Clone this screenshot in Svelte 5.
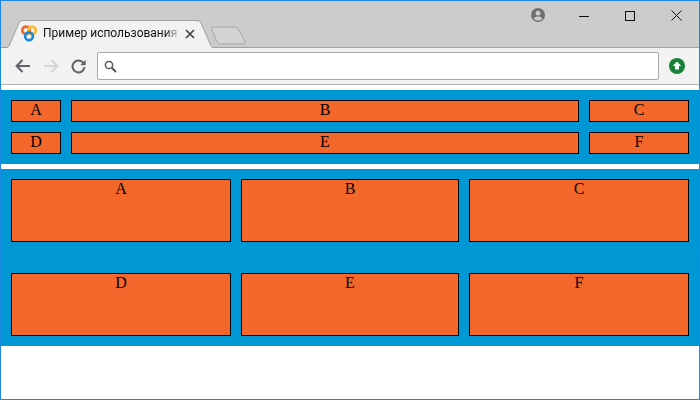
<script lang="ts">
	const top = ['A', 'B', 'C', 'D', 'E', 'F'];
</script>

<div class="window">
	<div class="tabstrip">
		<svg class="tabs" width="260" height="47" viewBox="0 0 260 47">
			<path d="M211.5 27.5 Q211 26 213 26 L235 26 Q237 26 238 27.5 L245 40 Q246 43 243 43 L221 43 Q218 43 217 41 Z" fill="#d4d4d4" stroke="#a6a6a6" />
			<path d="M6 47.5 L6 47 Q8 47 9 45 L19 22 Q20 19.5 23 19.5 L197 19.5 Q200 19.5 201 22 L211 45 Q212 47 214 47 L214 47.5 Z" fill="#f2f2f2" stroke="#a0a0a0" />
		</svg>
		<svg class="favicon" width="16" height="17" viewBox="0 0 16 17" fill="none" stroke-width="2.7">
			<circle cx="5" cy="5.4" r="3.7" stroke="#f4662c" />
			<circle cx="11" cy="5.4" r="3.7" stroke="#fbc02d" />
			<circle cx="8" cy="11.2" r="3.9" stroke="#1e88d8" />
		</svg>
		<span class="tab-title">Пример использования</span>
		<svg class="tab-close" width="10" height="10" viewBox="0 0 10 10">
			<path d="M1 1 L9 9 M9 1 L1 9" stroke="#444" stroke-width="1.7" />
		</svg>
		<svg class="profile" width="14" height="14" viewBox="0 0 14 14">
			<circle cx="7" cy="7" r="7" fill="#6f6f6f" />
			<circle cx="7" cy="5.2" r="2.4" fill="#ccc" />
			<path d="M2.8 11 Q3.6 8.6 7 8.6 Q10.4 8.6 11.2 11 Q9.5 12.6 7 12.6 Q4.5 12.6 2.8 11 Z" fill="#ccc" />
		</svg>
		<div class="controls">
			<svg width="10" height="10" viewBox="0 0 10 10"><path d="M0 5.5 H10" stroke="#111" /></svg>
			<svg width="10" height="10" viewBox="0 0 10 10"><rect x="0.5" y="0.5" width="9" height="9" fill="none" stroke="#111" /></svg>
			<svg width="11" height="11" viewBox="0 0 11 11"><path d="M0.5 0.5 L10.5 10.5 M10.5 0.5 L0.5 10.5" stroke="#111" /></svg>
		</div>
	</div>

	<div class="toolbar">
		<svg width="16" height="14" viewBox="0 0 16 14" fill="none" stroke="#5f6368" stroke-width="2">
			<path d="M15 7 H2 M7.5 1 L1.6 7 L7.5 13" />
		</svg>
		<svg width="16" height="14" viewBox="0 0 16 14" fill="none" stroke="#d4d4d4" stroke-width="2">
			<path d="M1 7 H14 M8.5 1 L14.4 7 L8.5 13" />
		</svg>
		<svg width="15" height="15" viewBox="0 0 15 15" fill="none">
			<path d="M12.6 4.2 A6 6 0 1 0 13.5 8" stroke="#5f6368" stroke-width="2" />
			<path d="M14.6 0.8 V6.2 H9.2 Z" fill="#5f6368" />
		</svg>
		<div class="omnibox">
			<svg width="13" height="13" viewBox="0 0 13 13" fill="none" stroke="#555">
				<circle cx="5" cy="5" r="3.6" stroke-width="1.5" />
				<path d="M7.8 7.8 L12 12" stroke-width="2" />
			</svg>
		</div>
		<svg width="16" height="16" viewBox="0 0 16 16">
			<circle cx="8" cy="8" r="8" fill="#188038" />
			<path d="M8 3.4 L12.2 8 H10 V11.6 H6 V8 H3.8 Z" fill="#fff" />
		</svg>
	</div>

	<div class="page">
		<div class="grid small">
			{#each top as label}
				<div class="cell">{label}</div>
			{/each}
		</div>
		<div class="grid large">
			{#each top as label}
				<div class="cell">{label}</div>
			{/each}
		</div>
	</div>
</div>

<style>
	:global(body) {
		margin: 0;
	}

	.window {
		box-sizing: border-box;
		width: 700px;
		height: 400px;
		border: 1px solid #1e88e5;
		background: #fff;
		overflow: hidden;
	}

	.tabstrip {
		position: relative;
		box-sizing: border-box;
		height: 47px;
		background: #cccccc;
		border-bottom: 1px solid #a0a0a0;
	}

	.tabs {
		position: absolute;
		left: -1px;
		top: 0;
	}

	.favicon {
		position: absolute;
		left: 20px;
		top: 24px;
	}

	.tab-title {
		position: absolute;
		left: 42px;
		top: 24px;
		white-space: nowrap;
		font: 12px/17px Roboto, sans-serif;
		color: #111;
		-webkit-mask-image: linear-gradient(to right, #000 122px, rgba(0, 0, 0, 0.25) 134px);
		mask-image: linear-gradient(to right, #000 122px, rgba(0, 0, 0, 0.25) 134px);
	}

	.tab-close {
		position: absolute;
		left: 184px;
		top: 28px;
	}

	.profile {
		position: absolute;
		left: 530px;
		top: 7px;
	}

	.controls {
		position: absolute;
		right: 17px;
		top: 9px;
		display: flex;
		align-items: center;
		gap: 36px;
	}

	.toolbar {
		box-sizing: border-box;
		height: 37px;
		display: flex;
		align-items: center;
		gap: 12px;
		padding: 0 14px;
		background: #f2f2f2;
		border-bottom: 1px solid #b4b4b4;
	}

	.omnibox {
		box-sizing: border-box;
		flex: 1;
		height: 28px;
		display: flex;
		align-items: center;
		padding-left: 6px;
		margin: 0 -2px 0 -1px;
		background: #fff;
		border: 1px solid #a9a9a9;
		border-radius: 2px;
	}

	.page {
		padding-top: 5px;
		display: flex;
		flex-direction: column;
		gap: 5px;
	}

	.grid {
		display: grid;
		padding: 10px;
		background: #0098d4;
		column-gap: 10px;
	}

	.small {
		grid-template-columns: 50px 1fr 100px;
		grid-auto-rows: 22px;
		row-gap: 10px;
	}

	.large {
		grid-template-columns: 220px 1fr 220px;
		grid-auto-rows: 63px;
		row-gap: 31px;
	}

	.cell {
		box-sizing: border-box;
		background: #f3672b;
		border: 1px solid #000;
		text-align: center;
		font: 16px/18px "Liberation Serif", serif;
		color: #000;
	}
</style>
